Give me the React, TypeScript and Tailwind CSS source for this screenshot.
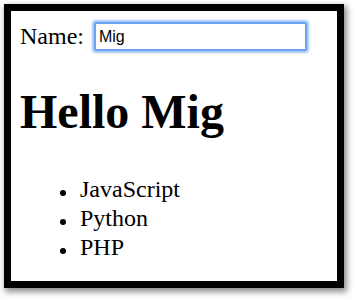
import React from "react";

export default function App() {
  const items = ["JavaScript", "Python", "PHP"];
  return (
    <div className="w-[357px] h-[300px] bg-white overflow-hidden" style={{ fontFamily: '"Liberation Serif", "Times New Roman", serif' }}>
      <div className="ml-[4px] mt-[4px] w-[340px] h-[284px] border-[7px] border-black bg-white shadow-[2px_3px_6px_1px_rgba(0,0,0,0.45)]">
        <div className="pl-[9px] pt-[9px]">
          <div className="flex items-center h-[33px]">
            <span className="text-[24px] leading-[29px] text-black mt-[-1px]">Name:</span>
            <div className="ml-[8px] w-[217px] h-[33px] p-[2px]">
              <input
                readOnly
                value="Mig"
                className="w-full h-full border-[2px] border-[#6aa3f0] rounded-[2px] shadow-[0_0_2px_2px_#a4c6f5] outline-none px-[3px] text-[16px] text-black"
                style={{ fontFamily: '"Liberation Sans", Arial, sans-serif' }}
              />
            </div>
          </div>
          <h1 className="mt-[32px] text-[48px] font-bold leading-[53px] text-black">Hello Mig</h1>
          <ul className="mt-[37px]">
            {items.map((t) => (
              <li key={t} className="flex items-center text-[24px] leading-[29px] text-black">
                <span className="ml-[40px] mt-[7px] w-[6px] h-[6px] rounded-full bg-black" />
                <span className="ml-[14px]">{t}</span>
              </li>
            ))}
          </ul>
        </div>
      </div>
    </div>
  );
}
